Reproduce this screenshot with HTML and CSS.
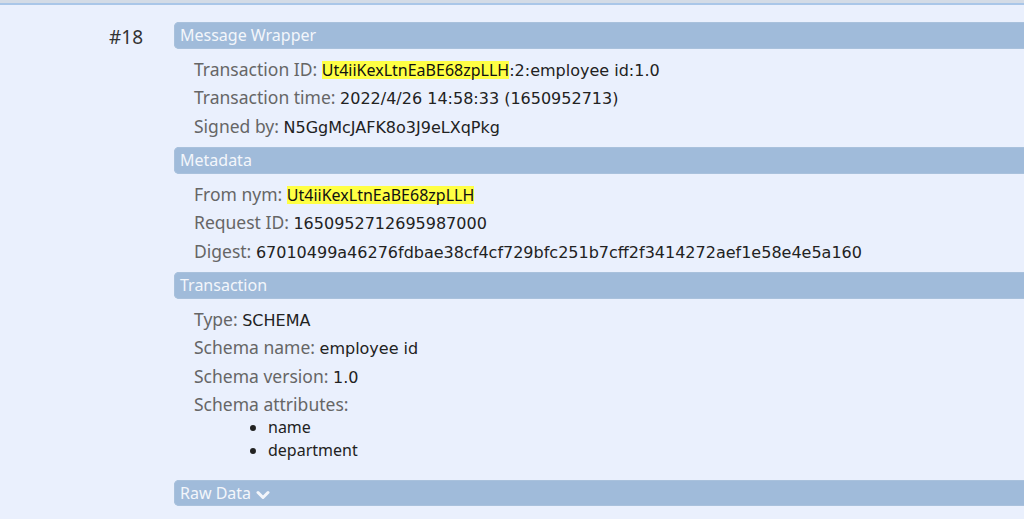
FILE: index.html
```html
<!DOCTYPE html>
<html>
<head>
<meta charset="utf-8">
<link rel="stylesheet" href="styles.css">
</head>
<body>
<div class="topstrip"></div>
<div class="page">
  <div class="entry">
    <div class="num">#18</div>
    <div class="details">
      <div class="bar">Message Wrapper</div>
      <div class="section">
        <div class="row"><span class="label">Transaction ID:</span> <span class="hl">Ut4iiKexLtnEaBE68zpLLH</span><span class="val">:2:employee id:1.0</span></div>
        <div class="row"><span class="label">Transaction time:</span> <span class="val">2022/4/26 14:58:33 (1650952713)</span></div>
        <div class="row"><span class="label">Signed by:</span> <span class="val">N5GgMcJAFK8o3J9eLXqPkg</span></div>
      </div>
      <div class="bar">Metadata</div>
      <div class="section">
        <div class="row"><span class="label">From nym:</span> <span class="hl">Ut4iiKexLtnEaBE68zpLLH</span></div>
        <div class="row"><span class="label">Request ID:</span> <span class="val">1650952712695987000</span></div>
        <div class="row"><span class="label">Digest:</span> <span class="val">67010499a46276fdbae38cf4cf729bfc251b7cff2f3414272aef1e58e4e5a160</span></div>
      </div>
      <div class="bar">Transaction</div>
      <div class="section">
        <div class="row"><span class="label">Type:</span> <span class="val">SCHEMA</span></div>
        <div class="row"><span class="label">Schema name:</span> <span class="val">employee id</span></div>
        <div class="row"><span class="label">Schema version:</span> <span class="val">1.0</span></div>
        <div class="row"><span class="label">Schema attributes:</span></div>
        <ul class="attrs">
          <li>name</li>
          <li>department</li>
        </ul>
      </div>
      <div class="bar">Raw Data <svg class="chev" width="14" height="10" viewBox="0 0 14 10"><polyline points="2,2.5 7,7.5 12,2.5" fill="none" stroke="#f3f6fb" stroke-width="3" stroke-linecap="round" stroke-linejoin="round"/></svg></div>
    </div>
  </div>
</div>
</body>
</html>
```

FILE: styles.css
```css
html, body {
  margin: 0;
  padding: 0;
  overflow: hidden;
}
body {
  background: #eaf0fd;
  font-family: "Noto Sans", "Open Sans", sans-serif;
  font-size: 16px;
}
.topstrip {
  height: 3px;
  background: #d3dbe6;
}
.page {
  border-top: 2px solid #a9c6e8;
  padding-top: 17px;
}
.entry {
  display: flex;
  margin-right: -12px;
}
.num {
  width: 143px;
  padding-right: 31px;
  text-align: right;
  box-sizing: content-box;
  font-size: 19px;
  color: #333;
  line-height: 30px;
}
.details {
  flex: 1;
}
.bar {
  height: 26.5px;
  line-height: 26.5px;
  padding-left: 6px;
  font-size: 16px;
  background: #a0bbda;
  color: #f3f6fb;
  border-radius: 5px;
  box-shadow: inset 0 0 0 1px #a9c1dc;
}
.chev {
  vertical-align: -1px;
  margin-left: 1px;
}
.section {
  padding: 6px 0 7px 20px;
}
.row {
  height: 28.5px;
  line-height: 28.5px;
  font-size: 17.5px;
  color: #666;
  white-space: nowrap;
}
.val {
  font-family: "DejaVu Sans", sans-serif;
  font-size: 16px;
  color: #222;
}
.hl {
  display: inline-block;
  line-height: 18px;
  font-size: 16px;
  background: #ffff44;
  color: #111;
}
.attrs {
  margin: -3px 0 11px 0;
  padding-left: 74px;
  line-height: 23px;
  font-size: 16px;
  color: #222;
}
```
